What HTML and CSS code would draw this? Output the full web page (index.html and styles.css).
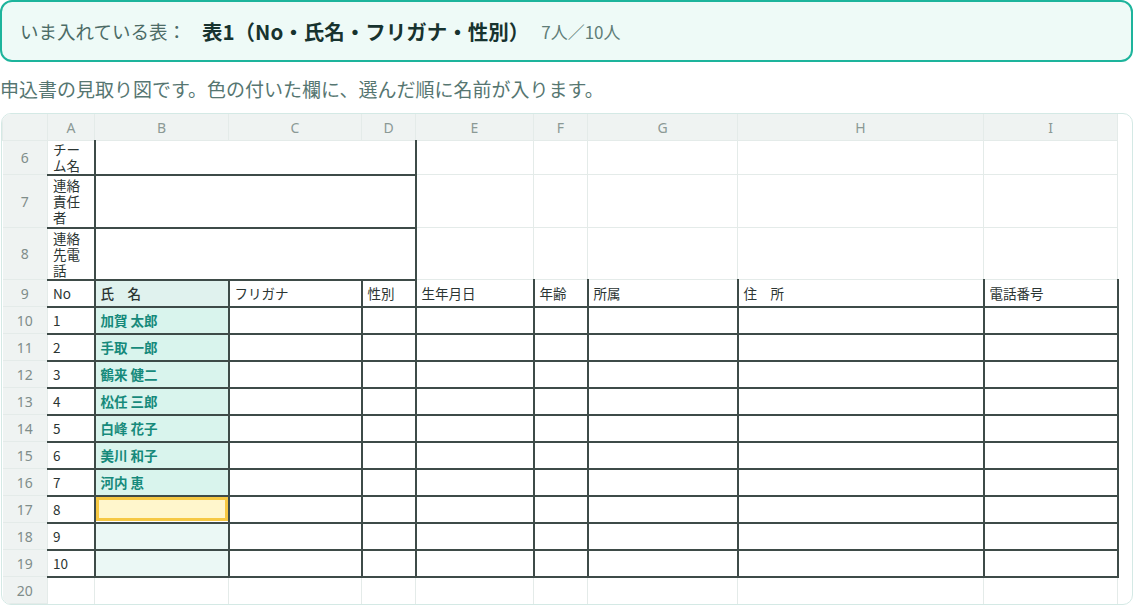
FILE: index.html
```html
<!DOCTYPE html>
<html lang="ja">
<head>
    <meta charset="UTF-8">
    <title>表の見取り図</title>
    <link rel="stylesheet" href="styles.css">
</head>
<body>
    <div class="banner">
        <span class="banner-label">いま入れている表：</span>
        <span class="banner-title">表1（No・氏名・フリガナ・性別）</span>
        <span class="banner-count">7人／10人</span>
    </div>

    <p class="note">申込書の見取り図です。色の付いた欄に、選んだ順に名前が入ります。</p>

    <div class="sheet">
        <table class="grid">
            <colgroup>
                <col class="c-head">
                <col class="c-a">
                <col class="c-b">
                <col class="c-c">
                <col class="c-d">
                <col class="c-e">
                <col class="c-f">
                <col class="c-g">
                <col class="c-h">
                <col class="c-i">
            </colgroup>
            <thead>
                <tr class="letters">
                    <th class="corner"></th>
                    <th>A</th><th>B</th><th>C</th><th>D</th><th>E</th><th>F</th><th>G</th><th>H</th><th>I</th>
                </tr>
            </thead>
            <tbody>
                <tr class="r6">
                    <th>6</th>
                    <td class="lbl">チーム名</td>
                    <td colspan="3" class="box"></td>
                    <td></td><td></td><td></td><td></td><td></td>
                </tr>
                <tr class="r7">
                    <th>7</th>
                    <td class="lbl">連絡責任者</td>
                    <td colspan="3" class="box"></td>
                    <td></td><td></td><td></td><td></td><td></td>
                </tr>
                <tr class="r8">
                    <th>8</th>
                    <td class="lbl">連絡先電話</td>
                    <td colspan="3" class="box"></td>
                    <td></td><td></td><td></td><td></td><td></td>
                </tr>
                <tr class="form head">
                    <th>9</th>
                    <td>No</td>
                    <td class="name-head">氏　名</td>
                    <td>フリガナ</td>
                    <td>性別</td>
                    <td class="open">生年月日</td>
                    <td class="open">年齢</td>
                    <td class="open">所属</td>
                    <td class="open">住　所</td>
                    <td class="open">電話番号</td>
                </tr>
                <tr class="form"><th>10</th><td>1</td><td class="name filled">加賀 太郎</td><td></td><td></td><td></td><td></td><td></td><td></td><td></td></tr>
                <tr class="form"><th>11</th><td>2</td><td class="name filled">手取 一郎</td><td></td><td></td><td></td><td></td><td></td><td></td><td></td></tr>
                <tr class="form"><th>12</th><td>3</td><td class="name filled">鶴来 健二</td><td></td><td></td><td></td><td></td><td></td><td></td><td></td></tr>
                <tr class="form"><th>13</th><td>4</td><td class="name filled">松任 三郎</td><td></td><td></td><td></td><td></td><td></td><td></td><td></td></tr>
                <tr class="form"><th>14</th><td>5</td><td class="name filled">白峰 花子</td><td></td><td></td><td></td><td></td><td></td><td></td><td></td></tr>
                <tr class="form"><th>15</th><td>6</td><td class="name filled">美川 和子</td><td></td><td></td><td></td><td></td><td></td><td></td><td></td></tr>
                <tr class="form"><th>16</th><td>7</td><td class="name filled">河内 恵</td><td></td><td></td><td></td><td></td><td></td><td></td><td></td></tr>
                <tr class="form"><th>17</th><td>8</td><td class="name next"><div class="cursor"></div></td><td></td><td></td><td></td><td></td><td></td><td></td><td></td></tr>
                <tr class="form"><th>18</th><td>9</td><td class="name empty"></td><td></td><td></td><td></td><td></td><td></td><td></td><td></td></tr>
                <tr class="form"><th>19</th><td>10</td><td class="name empty"></td><td></td><td></td><td></td><td></td><td></td><td></td><td></td></tr>
                <tr class="tail">
                    <th>20</th>
                    <td></td><td></td><td></td><td></td><td></td><td></td><td></td><td></td><td></td>
                </tr>
            </tbody>
        </table>
    </div>
</body>
</html>
```

FILE: styles.css
```css
body {
    margin: 0;
    padding: 0;
    font-family: 'Noto Sans CJK JP', 'Noto Sans', sans-serif;
    background: #ffffff;
    color: #2b3533;
}

/* Top banner */
.banner {
    box-sizing: border-box;
    height: 62px;
    margin-right: 1px;
    border: 2px solid #1db49c;
    border-radius: 12px;
    background: #eefaf7;
    display: flex;
    align-items: center;
    padding: 0 18px;
}

.banner-label {
    font-size: 18.5px;
    color: #4c6b66;
    margin-right: 16px;
}

.banner-title {
    font-size: 20.5px;
    font-weight: 700;
    color: #17332f;
    margin-right: 12px;
}

.banner-count {
    font-size: 17px;
    color: #5f7d78;
}

.note {
    margin: 14px 0 0 0;
    font-size: 19px;
    color: #567671;
    line-height: 26px;
}

/* Spreadsheet */
.sheet {
    margin: 11px 1px 0 1px;
    height: 492px;
    box-sizing: border-box;
    border: 1px solid #d4e9e5;
    border-radius: 10px;
    overflow: hidden;
    background: #fff;
}

.grid {
    border-collapse: collapse;
    table-layout: fixed;
    width: 1115px;
    font-size: 13.5px;
}

.c-head { width: 45px; }
.c-a { width: 47px; }
.c-b { width: 134px; }
.c-c { width: 133px; }
.c-d { width: 54px; }
.c-e { width: 118px; }
.c-f { width: 54px; }
.c-g { width: 150px; }
.c-h { width: 246px; }
.c-i { width: 134px; }

.grid th,
.grid td {
    border: 1px solid #e4ebe9;
    padding: 0 5px;
    vertical-align: middle;
    text-align: left;
    font-weight: 400;
    white-space: nowrap;
}

.grid .letters th {
    height: 26px;
    background: #eff3f2;
    color: #8b9995;
    font-family: 'Noto Sans', sans-serif;
    font-size: 14px;
    text-align: center;
    border-top: none;
}

.grid tbody th {
    background: #eff3f2;
    color: #7f8d8a;
    font-family: 'Noto Sans', sans-serif;
    font-size: 14px;
    text-align: center;
    border-left: none;
}

.r6 { height: 34px; }
.r7 { height: 53px; }
.r8 { height: 52px; }
.form { height: 27px; }
.tail { height: 27px; }

.grid .lbl {
    white-space: normal;
    line-height: 16px;
    font-size: 13.5px;
    border-bottom: 2px solid #3e4b48;
}

.grid .r7 .lbl,
.grid .r8 .lbl {
    border-top: 2px solid #3e4b48;
}

.grid .box {
    border: 2px solid #3e4b48;
    border-top: 1px solid #e4ebe9;
}

.grid .r7 .box,
.grid .r8 .box {
    border-top: 2px solid #3e4b48;
}

.grid .form td {
    border: 2px solid #3e4b48;
}

.grid .form td:first-of-type {
    border-left: 1px solid #e4ebe9;
}

.grid .head .open {
    border-top: 1px solid #e4ebe9;
}

.grid .name-head {
    background: #e0f2ee;
    font-weight: 500;
}

.grid .name {
    background: #d9f4ed;
}

.grid .filled {
    color: #168a7b;
    font-weight: 700;
}

.grid .empty {
    background: #ebf8f5;
}

.grid .next {
    padding: 0;
    background: #fff;
}

.cursor {
    height: 24px;
    box-sizing: border-box;
    border: 3px solid #f6c843;
    background: #fff6cc;
}

.grid .tail td {
    border-bottom: none;
}
```
